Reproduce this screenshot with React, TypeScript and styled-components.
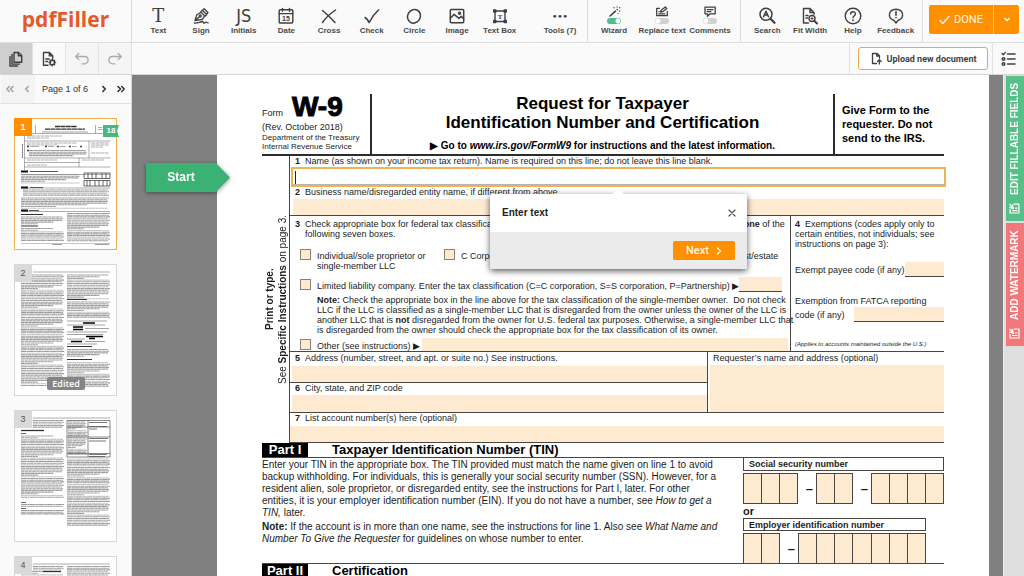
import React, { useState } from "react";
import styled, { createGlobalStyle, css } from "styled-components";

const sans = `"Liberation Sans", Arial, Helvetica, sans-serif`;
const ui = `Roboto, "Liberation Sans", Arial, sans-serif`;
const ink = "#1c1c1c";
const peach = "#fee9d1";
const orange = "#ff9100";
const rule = "#4b4541";

const GlobalStyle = createGlobalStyle`
  *, *::before, *::after { box-sizing: border-box; }
  body { margin: 0; background: #fafafa; font-family: ${sans}; color: ${ink}; }
  button, input { font: inherit; color: inherit; margin: 0; padding: 0; border: 0; border-radius: 0; background: none; outline: none; }
  button { cursor: pointer; }
  p, h1, h2, h3 { margin: 0; font: inherit; }
  svg { display: block; }
`;

/* ---------- shell ---------- */

const Shell = styled.div`
  display: flex;
  flex-direction: column;
  height: 100vh;
  overflow: hidden;
`;

const Header = styled.header`
  display: flex;
  flex: none;
  height: 43px;
  border-bottom: 1px solid #dedede;
  background: #fafafa;
`;

const Logo = styled.a`
  display: flex;
  align-items: center;
  justify-content: center;
  width: 132px;
  flex: none;
  padding-bottom: 4px;
  border-right: 1px solid #dedede;
  font: 700 21px/26px "Open Sans", "Noto Sans", sans-serif;
  color: #e5592a;
  text-decoration: none;
`;

const ToolGroup = styled.div<{ $width: number; $ruled?: boolean; $start?: number; $end?: number }>`
  display: flex;
  flex: none;
  width: ${(p) => p.$width}px;
  padding: 0 ${(p) => p.$end ?? 0}px 0 ${(p) => p.$start ?? 0}px;
  ${(p) => p.$ruled && "border-right: 1px solid #dedede;"}
`;

const toolBox = css`
  display: flex;
  flex: 1 1 0;
  min-width: 0;
  flex-direction: column;
  align-items: center;
  gap: 1px;
  padding-top: 6px;
  font: 700 8px/10px ${sans};
  color: #4a4a4a;
  white-space: nowrap;
  cursor: pointer;
`;

const Tool = styled.button`
  ${toolBox}
`;

const ToggleTool = styled.label`
  ${toolBox}
`;

const ToolIcon = styled.span`
  display: flex;
  align-items: center;
  justify-content: center;
  height: 19px;
  color: #3f3f3f;
`;

const ToggleStack = styled.span`
  display: flex;
  flex-direction: column;
  align-items: center;
  height: 19px;
  color: #3f3f3f;
`;

const Toggle = styled.input`
  appearance: none;
  width: 14px;
  height: 6px;
  border-radius: 3px;
  background: radial-gradient(circle at 3px 3px, #fff 2px, transparent 3px) #d2d2d2;
  &:checked {
    background: radial-gradient(circle at 11px 3px, #fff 2px, transparent 3px) #4fbd8b;
  }
`;

const LetterT = styled.span`
  font: 400 18px/19px "DejaVu Serif", "Liberation Serif", serif;
`;

const LetterJS = styled.span`
  font: 400 18px/19px "DejaVu Sans Condensed", "DejaVu Sans", sans-serif;
`;

const DoneWrap = styled.div`
  display: flex;
  flex: none;
  margin-left: auto;
  padding: 5px 6px 8px;
`;

const Done = styled.button`
  display: flex;
  align-items: center;
  justify-content: center;
  gap: 4px;
  width: 64px;
  border-radius: 2px 0 0 2px;
  background: ${orange};
  color: #fff6e8;
  font: 400 11px/14px ${ui};
`;

const DoneMore = styled.button`
  display: flex;
  align-items: center;
  justify-content: center;
  width: 26px;
  border-left: 1px solid #ffc070;
  border-radius: 0 2px 2px 0;
  background: ${orange};
  color: #fff;
`;

const SubBar = styled.div`
  display: flex;
  flex: none;
  height: 32px;
  border-bottom: 1px solid #d4d4d4;
  background: #fafafa;
`;

const SquareButton = styled.button<{ $active?: boolean; $muted?: boolean }>`
  display: flex;
  align-items: center;
  justify-content: center;
  width: 33px;
  border-right: 1px solid #e2e2e2;
  background: ${(p) => (p.$active ? "#cfcfcf" : p.$muted ? "#f5f5f5" : "#fafafa")};
  color: ${(p) => (p.$muted ? "#ababab" : "#3f3f3f")};
`;

const UploadWrap = styled.div`
  display: flex;
  margin-left: auto;
  padding: 4px 4px 4px 8px;
  border-left: 1px solid #e2e2e2;
  border-right: 1px solid #e2e2e2;
`;

const Upload = styled.button`
  display: flex;
  align-items: center;
  justify-content: center;
  gap: 4px;
  width: 130px;
  border: 1px solid #eda746;
  border-radius: 3px;
  background: #fff;
  color: #3f3f3f;
  font: 700 9px/12px ${ui};
`;

const ListButton = styled.button`
  display: flex;
  align-items: center;
  justify-content: center;
  width: 31px;
  color: #3f3f3f;
`;

const Main = styled.div`
  display: flex;
  flex: 1;
  min-height: 0;
`;

/* ---------- thumbnails ---------- */

const Sidebar = styled.aside`
  display: flex;
  flex-direction: column;
  flex: none;
  width: 132px;
  overflow: hidden;
  border-right: 1px solid #d8d8d8;
  background: #fafafa;
`;

const Pager = styled.nav`
  display: flex;
  flex: none;
  height: 29px;
  align-items: center;
  padding: 0 2px 0 1px;
  border-bottom: 1px solid #e0e0e0;
  font-size: 9px;
  line-height: 12px;
`;

const PagerButton = styled.button<{ $muted?: boolean }>`
  display: flex;
  justify-content: center;
  align-items: center;
  width: 17px;
  height: 28px;
  background: ${(p) => (p.$muted ? "#f4f4f4" : "transparent")};
  color: ${(p) => (p.$muted ? "#9f9f9f" : "#2a2a2a")};
`;

const PagerText = styled.span`
  flex: 1;
  text-align: center;
  white-space: nowrap;
  color: #333;
`;

const Thumbs = styled.div`
  display: flex;
  flex-direction: column;
  gap: 14px;
  padding: 14px;
`;

const Thumb = styled.button<{ $current?: boolean }>`
  position: relative;
  flex: none;
  display: block;
  height: 132px;
  border: 1px solid ${(p) => (p.$current ? "#f0b04c" : "#d6d6d6")};
  background: #fff;
`;

const ThumbNumber = styled.span<{ $current?: boolean }>`
  position: absolute;
  top: -1px;
  left: -1px;
  width: 18px;
  height: 18px;
  background: ${(p) => (p.$current ? orange : "#d9d9d9")};
  color: ${(p) => (p.$current ? "#fff" : "#555")};
  font-size: 9px;
  font-weight: ${(p) => (p.$current ? 700 : 400)};
  line-height: 18px;
  text-align: center;
`;

const FieldCount = styled.span`
  position: absolute;
  top: 6px;
  right: -3px;
  width: 16px;
  height: 12px;
  background: #4bb77f;
  clip-path: polygon(0 0, 100% 0, 88% 50%, 100% 100%, 0 100%);
  color: #fff;
  font: 700 8px/12px ${sans};
  text-align: center;
`;

const Edited = styled.span`
  position: absolute;
  bottom: 5px;
  left: 32px;
  width: 38px;
  border-radius: 2px;
  background: #858585;
  color: #fff;
  font: 600 9px/13px "Open Sans", "Noto Sans", sans-serif;
  text-align: center;
`;

/* ---------- canvas and sheet ---------- */

const Canvas = styled.main`
  position: relative;
  flex: 1;
  min-width: 0;
  overflow: hidden;
  padding: 0 14px 0 85px;
  background: #808080;
`;

const Sheet = styled.article`
  min-height: 998px;
  padding: 19px 45px;
  background: #fff;
  font-size: 9px;
  line-height: 10px;
  white-space: nowrap;
`;

const StartTag = styled.div`
  position: absolute;
  top: 88px;
  left: 14px;
  filter: drop-shadow(0 1px 2px rgba(0, 0, 0, 0.45));
`;

const StartButton = styled.button`
  width: 84px;
  height: 29px;
  padding-right: 14px;
  background: #3bb273;
  clip-path: polygon(0 0, 83% 0, 100% 50%, 83% 100%, 0 100%);
  color: #fff;
  font: 700 12px/29px ${sans};
`;

const FormHead = styled.header`
  display: flex;
  height: 62px;
  border-bottom: 2px solid #2c2c2c;
`;

const HeadLeft = styled.div`
  width: 110px;
  flex: none;
  border-right: 2px solid #2c2c2c;
`;

const FormName = styled.div`
  display: flex;
  align-items: baseline;
  gap: 9px;
  height: 28px;
  line-height: 26px;
`;

const FormCode = styled.strong`
  font-size: 28px;
  font-weight: 900;
  -webkit-text-stroke: 1px #000;
  color: #000;
`;

const Agency = styled.div`
  padding-top: 1px;
  font-size: 8px;
  line-height: 9px;
`;

const HeadTitle = styled.div`
  flex: 1;
  text-align: center;
  font-weight: 700;
  font-size: 17px;
  line-height: 19px;
  color: #000;
`;

const GoTo = styled.p`
  padding-top: 4px;
  font-size: 10px;
  line-height: 20px;
`;

const HeadRight = styled.div`
  width: 111px;
  flex: none;
  padding: 9px 0 0 7px;
  border-left: 2px solid #2c2c2c;
  font-weight: 700;
  font-size: 11px;
  line-height: 14px;
  color: #000;
`;

const FormBody = styled.div`
  display: flex;
`;

const SideNote = styled.div`
  display: flex;
  flex: none;
  flex-direction: column;
  align-items: center;
  width: 28px;
  padding: 0 1px;
  border-left: 1px solid ${rule};
  writing-mode: vertical-rl;
  transform: rotate(180deg);
  font-size: 10px;
  line-height: 13px;
`;

const Rows = styled.div`
  flex: 1;
  min-width: 0;
`;

const FieldLabel = styled.label<{ $height: number; $line?: number }>`
  display: flex;
  height: ${(p) => p.$height}px;
  line-height: ${(p) => p.$line ?? 10}px;
  padding-left: 5px;
`;

const Num = styled.b`
  flex: none;
  width: 10px;
`;

const PeachInput = styled.input<{ $height: number; $inset?: number }>`
  display: block;
  height: ${(p) => p.$height}px;
  width: calc(100% - ${(p) => p.$inset ?? 0}px);
  margin-left: ${(p) => p.$inset ?? 0}px;
  background: ${peach};
`;

const Ruled = styled.div`
  border-bottom: 1px solid ${rule};
`;

const ActiveField = styled.div`
  position: relative;
  display: flex;
  align-items: center;
  height: 20px;
  margin: 0 -2px 0 1px;
  border: 2px solid #efb356;
  background: #fff;
  box-shadow: inset 0 -1px 0 #b9b3ab;
`;

const Caret = styled.span`
  width: 1px;
  height: 13px;
  margin-left: 2px;
  background: #222;
`;

const ActiveInput = styled.input`
  flex: 1;
  min-width: 0;
  height: 14px;
  padding-left: 2px;
  caret-color: transparent;
`;

const SplitRow = styled.div`
  display: flex;
  border-bottom: 1px solid ${rule};
`;

const ClassCol = styled.div`
  flex: 1;
  min-width: 0;
  padding-top: 3px;
  border-right: 1px solid ${rule};
`;

const ExemptCol = styled.div`
  flex: none;
  width: 153px;
  padding: 3px 0 0 4px;
`;

const Line = styled.div<{ $top?: number; $height: number; $start?: number; $align?: string }>`
  display: flex;
  align-items: ${(p) => p.$align ?? "center"};
  height: ${(p) => p.$height}px;
  margin-top: ${(p) => p.$top ?? 0}px;
  padding-left: ${(p) => p.$start ?? 0}px;
`;

const Choice = styled.label<{ $width?: number }>`
  display: flex;
  align-items: flex-start;
  gap: 6px;
  flex: none;
  ${(p) => p.$width && `width: ${p.$width}px;`}
`;

const ChoiceText = styled.span`
  padding-top: 2px;
`;

const Tick = styled.input`
  appearance: none;
  flex: none;
  width: 11px;
  height: 11px;
  border: 1px solid #8a8178;
  background: ${peach};
`;

const InlineInput = styled.input<{ $height: number; $width?: number; $ruled?: boolean }>`
  align-self: flex-start;
  height: ${(p) => p.$height}px;
  min-width: 0;
  ${(p) => (p.$width ? `flex: none; width: ${p.$width}px;` : "flex: 1;")}
  ${(p) => p.$ruled && `border-bottom: 1px solid ${rule};`}
  background: ${peach};
`;

const Gap = styled.span<{ $width: number }>`
  flex: none;
  width: ${(p) => p.$width}px;
`;

const NoteText = styled.p`
  padding: 4px 0 0 27px;
`;

const FinePrint = styled.p`
  padding-top: 17px;
  font-size: 6px;
  font-style: italic;
`;

const AddressCol = styled.div`
  flex: 1;
  min-width: 0;
  border-right: 1px solid ${rule};
`;

const RequesterCol = styled.div`
  flex: none;
  width: 236px;
`;

const PartHead = styled.div`
  display: flex;
  height: 15px;
  border-bottom: 1px solid ${rule};
  font-weight: 700;
  font-size: 13px;
  line-height: 14px;
  color: #000;
`;

const PartTag = styled.span`
  width: 46px;
  margin-right: 24px;
  background: #000;
  color: #fff;
  text-align: center;
`;

const TinRow = styled.div`
  display: flex;
  justify-content: space-between;
  height: 106px;
  border-bottom: 1px solid ${rule};
`;

const TinText = styled.div`
  display: flex;
  flex-direction: column;
  gap: 2px;
  padding-top: 1px;
  font-size: 10px;
  line-height: 12px;
`;

const TinBoxes = styled.div`
  width: 201px;
  flex: none;
`;

const NumberBlock = styled.fieldset<{ $width: number }>`
  margin: 0;
  padding: 0;
  border: 0;
  min-width: 0;
  width: ${(p) => p.$width}px;
`;

const NumberTitle = styled.div<{ $top?: boolean }>`
  height: 13px;
  margin-bottom: 2px;
  padding-left: 5px;
  border: 1px solid ${rule};
  ${(p) => !p.$top && "border-top: 0;"}
  font-weight: 700;
  line-height: 12px;
`;

const Cells = styled.div<{ $height: number; $units: number }>`
  display: grid;
  grid-template-columns: repeat(${(p) => p.$units}, minmax(0, 1fr));
  height: ${(p) => p.$height}px;
`;

const CellGroup = styled.div<{ $count: number }>`
  display: flex;
  grid-column: span ${(p) => p.$count};
  min-width: 0;
  border: 1px solid ${rule};
  border-right: 0;
`;

const Cell = styled.input`
  flex: 1 1 0;
  width: 0;
  min-width: 0;
  border-right: 1px solid ${rule};
  background: ${peach};
  text-align: center;
`;

const Dash = styled.span`
  display: flex;
  min-width: 0;
  align-items: center;
  justify-content: center;
  padding-left: 5px;
  font-weight: 700;
  font-size: 13px;
`;

const OrText = styled.div`
  height: 14px;
  font-weight: 700;
  font-size: 11px;
  line-height: 15px;
`;

/* ---------- hint popover ---------- */

const Popover = styled.div`
  position: absolute;
  top: 25px;
  left: 197px;
  width: 257px;
  background: #fff;
  border-radius: 2px;
  box-shadow: 0 2px 6px rgba(0, 0, 0, 0.65);
  z-index: 2;
  &::before {
    content: "";
    position: absolute;
    top: -5px;
    left: 122px;
    border: 6px solid transparent;
    border-top: 0;
    border-bottom: 5px solid #fff;
  }
`;

const PopHead = styled.div`
  display: flex;
  align-items: center;
  justify-content: space-between;
  height: 38px;
  padding: 0 10px 0 12px;
  font-weight: 700;
  font-size: 10px;
`;

const PopFoot = styled.div`
  display: flex;
  justify-content: flex-end;
  height: 37px;
  padding: 9px 12px;
  border-radius: 0 0 2px 2px;
  background: #ebebeb;
`;

const CloseButton = styled.button`
  display: flex;
  padding: 1px;
  color: #555;
`;

const Next = styled.button`
  display: flex;
  align-items: center;
  justify-content: center;
  gap: 7px;
  width: 62px;
  height: 19px;
  border-radius: 2px;
  background: ${orange};
  color: #fff4e2;
  font: 500 11px/19px ${ui};
`;

/* ---------- right rail ---------- */

const Rail = styled.aside`
  display: flex;
  flex: none;
  flex-direction: column;
  gap: 2px;
  width: 21px;
  padding: 1px 1px 0 2px;
  border-left: 1px solid #efefef;
  background: #dedede;
`;

const RailTab = styled.button<{ $color: string; $height: number }>`
  display: flex;
  align-items: center;
  gap: 8px;
  width: 18px;
  height: ${(p) => p.$height}px;
  padding: 7px 0;
  background: ${(p) => p.$color};
  color: #fff;
  font: 700 10px/18px ${sans};
  writing-mode: vertical-rl;
  transform: rotate(180deg);
  white-space: nowrap;
`;

/* ---------- icons ---------- */

type IconProps = { w?: number; h?: number; sw?: number; children: React.ReactNode };

const Icon = ({ w = 18, h = 18, sw = 1.4, children }: IconProps) => (
  <svg
    width={w}
    height={h}
    viewBox={`0 0 ${w} ${h}`}
    fill="none"
    stroke="currentColor"
    strokeWidth={sw}
    strokeLinecap="round"
    strokeLinejoin="round"
    aria-hidden="true"
  >
    {children}
  </svg>
);

const SignIcon = () => (
  <Icon sw={1.3}>
    <path d="M3 13.500 4.800 7.800 9 5.200l3.600 3.600-2.200 3.500L3 13.500Zm.3-.3 4.200-3.500M8.800 4.700l1.500-1.500 4.500 4.300-1.500 1.500M10.800 3l1.400-1.200L16 5.500l-1.200 1.300" />
    <circle cx="8.300" cy="9" r="1" />
    <path d="M2.400 16c3.200.6 5.200-1.300 8-1.500 1.300 0 .4 1.700 1.600 1.700 1 0 1-1 2.200-1 .8 0 .8.800 2 .600" />
  </Icon>
);
const DateIcon = () => (
  <Icon>
    <rect x="2.200" y="2.800" width="13.600" height="13.200" rx="1" />
    <path d="M2.200 6.600h13.600M5.500 1.400v2.800M12.500 1.400v2.800" />
    <text x="9" y="14.200" textAnchor="middle" fontFamily="Liberation Sans" fontSize="7" fontWeight="700" fill="currentColor" stroke="none">
      15
    </text>
  </Icon>
);
const CrossIcon = () => (
  <Icon sw={1.5}>
    <path d="M2.500 3.500c4 3.200 8.500 7.600 12.500 12M15.500 3C10.500 6.500 5.500 11 2.500 15.500" />
  </Icon>
);
const CheckIcon = () => (
  <Icon sw={1.6}>
    <path d="M2.200 10.500c1.800 1.400 2.800 2.800 4 5C8.500 10.500 11.500 6.500 15.500 3" />
  </Icon>
);
const CircleIcon = () => (
  <Icon sw={1.5}>
    <ellipse cx="9" cy="9.300" rx="6.300" ry="7" transform="rotate(30 9 9.300)" />
  </Icon>
);
const ImageIcon = () => (
  <Icon sw={1.5}>
    <rect x="2.300" y="2.600" width="13.400" height="13.200" rx="1" />
    <path d="m2.500 11 3.500-3.600 5 4 2.200-2 2.400 2.400" />
    <circle cx="11.500" cy="6.300" r="1" />
  </Icon>
);
const TextBoxIcon = () => (
  <Icon>
    <path d="M4 4h10v10.500H4z" />
    <g fill="currentColor" stroke="none">
      <rect x="2" y="2.200" width="3.500" height="3.500" rx=".8" />
      <rect x="12.500" y="2.200" width="3.500" height="3.500" rx=".8" />
      <rect x="2" y="12.800" width="3.500" height="3.500" rx=".8" />
      <rect x="12.500" y="12.800" width="3.500" height="3.500" rx=".8" />
      <text x="9" y="11.800" textAnchor="middle" fontFamily="Liberation Serif" fontSize="7" fontWeight="700">
        T
      </text>
    </g>
  </Icon>
);
const DotsIcon = () => (
  <Icon>
    <g fill="currentColor" stroke="none">
      <circle cx="3.800" cy="9.300" r="1.400" />
      <circle cx="9" cy="9.300" r="1.400" />
      <circle cx="14.200" cy="9.300" r="1.400" />
    </g>
  </Icon>
);
const WandIcon = () => (
  <Icon w={14} h={12} sw={1.6}>
    <path d="m3 10 5.500-4.800" />
    <g fill="currentColor" stroke="none">
      <circle cx="10.200" cy="3.600" r=".8" />
      <circle cx="7" cy="1.800" r=".7" />
      <circle cx="10" cy=".9" r=".6" />
      <circle cx="12.600" cy="1.700" r=".7" />
      <circle cx="12.600" cy="5" r=".7" />
      <circle cx="11" cy="7.600" r=".7" />
    </g>
  </Icon>
);
const ReplaceIcon = () => (
  <Icon w={14} h={12} sw={1.300}>
    <path d="M4.500 2.300H1.700v7.400h10.600V5.500M3.800 7.900h6M5.500 6.200l.6-2L10.300 1l1.500 1.600-4 3.100-2.300.5ZM4 5.500v.1" />
  </Icon>
);
const CommentIcon = () => (
  <Icon w={14} h={12} sw={1.300}>
    <path d="M2 1.200h10.200v6.600H7l-2.500 2.400V7.800H2zM4.300 3.600h5.600M4.300 5.600h3.600" />
  </Icon>
);
const SearchIcon = () => (
  <Icon sw={1.5}>
    <circle cx="8" cy="7.300" r="6" />
    <path d="m12.500 11.800 4 4" strokeWidth="2.200" />
    <path d="m5.500 9.800 2.500-5.500 2.500 5.500M6.500 8.100h3" />
  </Icon>
);
const FitIcon = () => (
  <Icon>
    <path d="M7.500 16H2.500V1.500H9L13 5.500v1.700M9 1.500v4h4M5 8.500h2M5 11h1.500" />
    <circle cx="11" cy="11.500" r="3" />
    <path d="m13.300 13.800 2.700 2.700" strokeWidth="2" />
    <path d="M10 11.500h2M11 10.500v2" strokeWidth="1" />
  </Icon>
);
const HelpIcon = () => (
  <Icon>
    <circle cx="9" cy="9" r="7.800" />
    <path d="M6.600 7.100c0-3.200 4.800-3.200 4.800 0 0 1.700-2.400 1.700-2.400 3.700" />
    <path d="M9 13.200v.1" strokeWidth="1.700" />
  </Icon>
);
const FeedbackIcon = () => (
  <Icon>
    <path d="M6.800 13.200C.5 11.500.8 2.500 9 2.300c8.200.2 8.500 9.200 2.200 10.900L9 16z" />
    <path d="M9 4.800v3.500M9 10.600v.1" strokeWidth="1.600" />
  </Icon>
);
const PagesIcon = () => (
  <Icon w={16} h={16} sw={1.4}>
    <path d="M6 1.500h4.500L13.700 4.500v6.700H6zM10.300 1.700v3h3.200M4 3.500v9.600h7.500M2 5.500V15h7.500" />
  </Icon>
);
const PageGearIcon = () => (
  <Icon w={16} h={16} sw={1.4}>
    <path d="M7 14.200H2.500V1.500h6l3.200 3.200v2.500M8.300 1.700v3.200h3.200M4.800 8h3.400M4.800 10.500h1.800" />
    <circle cx="11.300" cy="11.500" r="2.200" />
    <path d="M11.300 8.300v.3M11.300 14.400v.3M8.200 11.500h.3M14.200 11.500h.3M9.100 9.300l.2.200M13.300 13.500l.2.200M13.500 9.300l-.2.200M9.300 13.500l-.2.200" strokeWidth="1.600" />
  </Icon>
);
const UndoIcon = () => (
  <Icon w={16} h={14} sw={1.3}>
    <path d="M4.800 1.500 1.600 4.500l3.200 3M1.800 4.500h8.700c4.800 0 4.800 7.300 0 7.300H8" />
  </Icon>
);
const RedoIcon = () => (
  <Icon w={16} h={14} sw={1.3}>
    <path d="m11.200 1.500 3.200 3-3.200 3M14.200 4.500H5.500c-4.800 0-4.800 7.300 0 7.300H8" />
  </Icon>
);
const UploadIcon = () => (
  <Icon w={13} h={13} sw={1.3}>
    <path d="M6.500 11.500h-4v-10H7l2.500 2.300v2.400M6.800 1.500V4h2.500M9.300 12V8M7.500 9.500 9.300 7.700l1.800 1.800" />
  </Icon>
);
const ListIcon = () => (
  <Icon w={17} h={16} sw={1.5}>
    <path d="M7.500 3h7.500M7.500 8h7.500M7.500 13h7.500" />
    <path d="m2 2.500 1.300 1.300 2-2.300" strokeWidth="1.300" />
    <circle cx="3.500" cy="8" r="1.300" />
    <circle cx="3.500" cy="13" r="1.300" />
  </Icon>
);
const Chevron = ({ dir, double }: { dir: "left" | "right"; double?: boolean }) => (
  <Icon w={10} h={8} sw={1.5}>
    <g transform={dir === "left" ? "matrix(-1 0 0 1 10 0)" : undefined}>
      {double ? <path d="M2 1.500 4.500 4 2 6.500M5.700 1.500 8.200 4 5.700 6.500" /> : <path d="M3.800 1.500 6.300 4 3.800 6.500" />}
    </g>
  </Icon>
);
const StampIcon = () => (
  <Icon w={11} h={11} sw={1.2}>
    <path d="M6 10H1V1h9v4M3 3.500h4.500M3 6h1.500M10.300 7 6.500 5.500 7.800 9.500M8 7.300l2.300 2.600" />
  </Icon>
);

/* ---------- thumbnail drawings ---------- */

type BlockProps = { x: number; y: number; w: number; rows: number; step?: number; seed?: number };

const TextBlock = ({ x, y, w, rows, step = 1.7, seed = 1 }: BlockProps) => (
  <g stroke="#8c8c8c" strokeWidth="1.1">
    {Array.from({ length: rows }, (_, i) => {
      const k = (i * 7 + seed * 5) % 11;
      const length = k === 0 ? w * 0.4 : k === 4 ? w * 0.75 : w - (k % 3);
      return (
        <line
          key={i}
          x1={x}
          x2={x + length}
          y1={y + i * step}
          y2={y + i * step}
          strokeDasharray={`${3 + (k % 4)} 0.4 ${2 + (k % 3)} 0.3`}
          opacity={k % 5 === 2 ? 0.5 : 0.85}
        />
      );
    })}
  </g>
);

const ThumbSvg = ({ children }: { children: React.ReactNode }) => (
  <svg width="100%" height="100%" viewBox="0 0 101 130" aria-hidden="true">
    {children}
  </svg>
);

const FirstPage = () => (
  <ThumbSvg>
    <g stroke="#333" strokeWidth="1.3">
      <path d="M40 7.500h22M30 10.200h40" strokeDasharray="5 .4" />
    </g>
    <path d="M27 13h46" stroke="#888" strokeWidth=".8" />
    <path d="M6 14.500h89M20.500 6v8.500M80.500 6v8.500M9.500 14.500V51M9.500 22h86M9.500 39h86M9.500 43.500h55M9.500 48h86M64 39v9M74 22v17M6 55.500h89M6 69h89M6 92.500h89" stroke="#777" strokeWidth=".6" fill="none" />
    <path d="M7.500 25v14" stroke="#777" strokeWidth="1" strokeDasharray="2 .4" />
    <path d="M83 8.500h10M83 10.500h11M12 17h35M12 19h22M12 24h50M12 26h30M76 24h18M76 26h18M76 28h12M76 34h18M12 41h30M12 46h20M67 41h22" stroke="#999" strokeWidth=".8" strokeDasharray="4 .5" />
    <path d="M12 27.500h2M30 27.500h2M42 27.500h2M54 27.500h2M65 27.500h2M12 31.500h2" stroke="#444" strokeWidth="1.400" />
    <path d="M15 27.500h9M33 27.500h6M45 27.500h6M57 27.500h5" stroke="#999" strokeWidth=".8" />
    <TextBlock x={14} y={31.5} w={59} rows={4} />
    <path d="M6 52.500h7M6 68.500h7M6 91.500h7" stroke="#111" strokeWidth="1.800" />
    <path d="M15 52.500h28M15 68.500h13M14 91.500h10" stroke="#555" strokeWidth="1.100" />
    <TextBlock x={6} y={55.5} w={60} rows={6} />
    <path d="M69 54h26v5.500H69zM69 61.500h26V67H69zM73 54v5.500M77 54v5.500M81 54v5.500M87 54v5.500M91 54v5.500M72 61.500V67M75 61.500V67M80 61.500V67M84 61.500V67M88 61.500V67M92 61.500V67" stroke="#444" strokeWidth=".8" fill="none" />
    <TextBlock x={8} y={71} w={86} rows={4} seed={2} />
    <TextBlock x={6} y={79} w={88} rows={7} seed={4} />
    <path d="M6 95.500h22M6 107h17" stroke="#333" strokeWidth="1.200" />
    <TextBlock x={6} y={98} w={43} rows={5} seed={1} />
    <TextBlock x={6} y={109.5} w={43} rows={8} seed={3} />
    <TextBlock x={52} y={94.5} w={43} rows={17} seed={5} />
    <path d="M6 124.500h89" stroke="#888" strokeWidth=".5" />
    <path d="M37 125.500h10M80 125.500h14" stroke="#888" strokeWidth=".8" />
  </ThumbSvg>
);

const SecondPage = () => (
  <ThumbSvg>
    <path d="M18 7h77" stroke="#777" strokeWidth=".6" />
    <TextBlock x={6} y={10} w={43} rows={66} seed={2} />
    <TextBlock x={52} y={10} w={43} rows={15} seed={6} />
    <path d="M52 34.500h20M52 81.500h25M52 94.500h25" stroke="#333" strokeWidth="1.200" />
    <TextBlock x={52} y={37} w={43} rows={10} seed={4} />
    <path d="M68 58h12M58 62h10M58 64.500h10M71 71.500h17M74 73.500h6M56 76.500h11" stroke="#000" strokeWidth="1.600" />
    <path d="M52 56h40M52 60h38M70 63.500h24M52 67h40M52 69.500h36M52 74h18M70 76.500h20M52 79h30" stroke="#999" strokeWidth=".9" />
    <TextBlock x={52} y={84.5} w={43} rows={5} seed={1} />
    <TextBlock x={52} y={97.5} w={43} rows={15} seed={7} />
  </ThumbSvg>
);

const ThirdPage = () => (
  <ThumbSvg>
    <path d="M18 7h77" stroke="#777" strokeWidth=".6" />
    <TextBlock x={18} y={9.5} w={31} rows={5} seed={2} />
    <path d="M6 19.500h23" stroke="#333" strokeWidth="1.300" />
    <path d="M6 22.500h5" stroke="#666" strokeWidth="1" />
    <TextBlock x={6} y={25} w={43} rows={37} seed={3} />
    <path d="M6 91.500h5M6 97.500h5" stroke="#666" strokeWidth="1" />
    <TextBlock x={6} y={93.5} w={43} rows={2} seed={5} />
    <TextBlock x={6} y={99.5} w={43} rows={3} seed={5} />
    <TextBlock x={53} y={11} w={19} rows={20} seed={1} />
    <path d="M74 11.500h18M74 15.500h18M74 18h8M74 27.500h19M74 30h17M74 43.500h18M74 45.500h16" stroke="#777" strokeWidth="1" />
    <path d="M52 9.500h43V46H52zM73 9.500V46M52 16h43M52 26h43M52 42.500h43" stroke="#555" strokeWidth=".7" fill="none" />
    <TextBlock x={52} y={48} w={43} rows={40} seed={8} />
  </ThumbSvg>
);

const FourthPage = () => (
  <ThumbSvg>
    <path d="M18 7h77" stroke="#777" strokeWidth=".6" />
    <TextBlock x={18} y={9.5} w={31} rows={3} seed={2} />
    <TextBlock x={6} y={14.5} w={43} rows={50} seed={3} />
    <path d="M28 14.500h18" stroke="#333" strokeWidth="1.300" />
    <TextBlock x={52} y={9.5} w={43} rows={55} seed={5} />
  </ThumbSvg>
);

/* ---------- data ---------- */

const drawTools: [string, React.ReactNode][] = [
  ["Text", <LetterT>T</LetterT>],
  ["Sign", <SignIcon />],
  ["Initials", <LetterJS>JS</LetterJS>],
  ["Date", <DateIcon />],
  ["Cross", <CrossIcon />],
  ["Check", <CheckIcon />],
  ["Circle", <CircleIcon />],
  ["Image", <ImageIcon />],
  ["Text Box", <TextBoxIcon />],
];

const modeTools: [string, React.ReactNode, boolean][] = [
  ["Wizard", <WandIcon />, true],
  ["Replace text", <ReplaceIcon />, false],
  ["Comments", <CommentIcon />, false],
];

const viewTools: [string, React.ReactNode][] = [
  ["Search", <SearchIcon />],
  ["Fit Width", <FitIcon />],
  ["Help", <HelpIcon />],
  ["Feedback", <FeedbackIcon />],
];

const pages = [<FirstPage />, <SecondPage />, <ThirdPage />, <FourthPage />];

/* ---------- parts ---------- */

const ToolButton = ({ label, icon }: { label: string; icon: React.ReactNode }) => (
  <Tool type="button">
    <ToolIcon>{icon}</ToolIcon>
    {label}
  </Tool>
);

const CheckItem = ({ children, width }: { children: React.ReactNode; width?: number }) => (
  <Choice $width={width}>
    <Tick type="checkbox" />
    <ChoiceText>{children}</ChoiceText>
  </Choice>
);

const DigitGroup = ({ count, name }: { count: number; name: string }) => (
  <CellGroup $count={count}>
    {Array.from({ length: count }, (_, i) => (
      <Cell key={i} maxLength={1} aria-label={`${name} digit ${i + 1}`} />
    ))}
  </CellGroup>
);

const TopBars = () => (
  <>
    <Header>
      <Logo href="#">pdfFiller</Logo>
      <ToolGroup $width={389} $start={5}>
        {drawTools.map(([label, icon]) => (
          <ToolButton key={label} label={label} icon={icon} />
        ))}
      </ToolGroup>
      <ToolGroup $width={67} $start={12} $ruled>
        <ToolButton label="Tools (7)" icon={<DotsIcon />} />
      </ToolGroup>
      <ToolGroup $width={153} $start={2} $end={6} $ruled>
        {modeTools.map(([label, icon, on]) => (
          <ToggleTool key={label}>
            <ToggleStack>
              {icon}
              <Toggle type="checkbox" defaultChecked={on} />
            </ToggleStack>
            {label}
          </ToggleTool>
        ))}
      </ToolGroup>
      <ToolGroup $width={182} $start={5} $end={5} $ruled>
        {viewTools.map(([label, icon]) => (
          <ToolButton key={label} label={label} icon={icon} />
        ))}
      </ToolGroup>
      <DoneWrap>
        <Done type="button">
          <Icon w={11} h={10} sw={1.5}>
            <path d="m1 5.500 2.800 3L10 1.500" />
          </Icon>
          DONE
        </Done>
        <DoneMore type="button" aria-label="More save options">
          <Icon w={8} h={6} sw={1.5}>
            <path d="m1.800 1.500 2.200 2 2.200-2" />
          </Icon>
        </DoneMore>
      </DoneWrap>
    </Header>
    <SubBar>
      <SquareButton type="button" $active aria-label="Pages">
        <PagesIcon />
      </SquareButton>
      <SquareButton type="button" aria-label="Page settings">
        <PageGearIcon />
      </SquareButton>
      <SquareButton type="button" $muted aria-label="Undo">
        <UndoIcon />
      </SquareButton>
      <SquareButton type="button" $muted aria-label="Redo">
        <RedoIcon />
      </SquareButton>
      <UploadWrap>
        <Upload type="button">
          <UploadIcon />
          Upload new document
        </Upload>
      </UploadWrap>
      <ListButton type="button" aria-label="Field list">
        <ListIcon />
      </ListButton>
    </SubBar>
  </>
);

const Pages = () => (
  <Sidebar>
    <Pager aria-label="Page navigation">
      <PagerButton type="button" $muted aria-label="First page">
        <Chevron dir="left" double />
      </PagerButton>
      <PagerButton type="button" $muted aria-label="Previous page">
        <Chevron dir="left" />
      </PagerButton>
      <PagerText>Page 1 of 6</PagerText>
      <PagerButton type="button" aria-label="Next page">
        <Chevron dir="right" />
      </PagerButton>
      <PagerButton type="button" aria-label="Last page">
        <Chevron dir="right" double />
      </PagerButton>
    </Pager>
    <Thumbs>
      {pages.map((drawing, i) => (
        <Thumb type="button" key={i} $current={i === 0}>
          {drawing}
          <ThumbNumber $current={i === 0}>{i + 1}</ThumbNumber>
          {i === 0 && <FieldCount>18</FieldCount>}
          {i === 1 && <Edited>Edited</Edited>}
        </Thumb>
      ))}
    </Thumbs>
  </Sidebar>
);

const Hint = ({ onClose }: { onClose: () => void }) => (
  <Popover role="dialog" aria-label="Enter text">
    <PopHead>
      Enter text
      <CloseButton type="button" aria-label="Close" onClick={onClose}>
        <Icon w={8} h={8} sw={1.2}>
          <path d="m1 1 6 6M7 1 1 7" />
        </Icon>
      </CloseButton>
    </PopHead>
    <PopFoot>
      <Next type="button">
        Next
        <Icon w={6} h={8} sw={1.4}>
          <path d="m1.500 1 3 3-3 3" />
        </Icon>
      </Next>
    </PopFoot>
  </Popover>
);

const Form = () => {
  const [hint, setHint] = useState(true);
  return (
    <Sheet>
      <FormHead>
        <HeadLeft>
          <FormName>
            Form <FormCode>W-9</FormCode>
          </FormName>
          (Rev. October 2018)
          <Agency>
            Department of the Treasury
            <br />
            Internal Revenue Service
          </Agency>
        </HeadLeft>
        <HeadTitle>
          <h1>
            Request for Taxpayer
            <br />
            Identification Number and Certification
          </h1>
          <GoTo>
            ▶ Go to <i>www.irs.gov/FormW9</i> for instructions and the latest information.
          </GoTo>
        </HeadTitle>
        <HeadRight>
          Give Form to the
          <br />
          requester. Do not
          <br />
          send to the IRS.
        </HeadRight>
      </FormHead>
      <FormBody>
        <SideNote>
          <b>Print or type.</b>
          <span>
            See <b>Specific Instructions</b> on page 3.
          </span>
        </SideNote>
        <Rows>
          <FieldLabel htmlFor="name" $height={11}>
            <Num>1</Num>Name (as shown on your income tax return). Name is required on this line; do not leave this line blank.
          </FieldLabel>
          <ActiveField>
            <Caret />
            <ActiveInput id="name" />
            {hint && <Hint onClose={() => setHint(false)} />}
          </ActiveField>
          <Ruled>
            <FieldLabel htmlFor="business" $height={12}>
              <Num>2</Num>Business name/disregarded entity name, if different from above
            </FieldLabel>
            <PeachInput id="business" $height={16} $inset={3} />
          </Ruled>
          <SplitRow>
            <ClassCol>
              <Line $height={20} $start={5} $align="flex-start">
                <Num>3</Num>
                <span>
                  Check appropriate box for federal tax classification of the person whose name is entered on line 1; check only <b>one</b> of the
                  <br />
                  following seven boxes.
                </span>
              </Line>
              <Line $top={10} $height={23} $start={10} $align="flex-start">
                <CheckItem width={144}>
                  Individual/sole proprietor or
                  <br />
                  single-member LLC
                </CheckItem>
                <CheckItem width={86}>C Corporation</CheckItem>
                <CheckItem width={86}>S Corporation</CheckItem>
                <CheckItem width={98}>Partnership</CheckItem>
                <CheckItem>Trust/estate</CheckItem>
              </Line>
              <Line $top={5} $height={14} $start={10} $align="flex-end">
                <CheckItem>Limited liability company. Enter the tax classification (C=C corporation, S=S corporation, P=Partnership) ▶</CheckItem>
                <InlineInput $height={15} $width={43} $ruled aria-label="Tax classification" />
              </Line>
              <NoteText>
                <b>Note:</b> Check the appropriate box in the line above for the tax classification of the single-member owner.&nbsp; Do not check
                <br />
                LLC if the LLC is classified as a single-member LLC that is disregarded from the owner unless the owner of the LLC is
                <br />
                another LLC that is <b>not</b> disregarded from the owner for U.S. federal tax purposes. Otherwise, a single-member LLC that
                <br />
                is disregarded from the owner should check the appropriate box for the tax classification of its owner.
              </NoteText>
              <Line $top={3} $height={13} $start={10}>
                <CheckItem>Other (see instructions) ▶</CheckItem>
                <Gap $width={2} />
                <InlineInput $height={13} aria-label="Other classification" />
                <Gap $width={2} />
              </Line>
            </ClassCol>
            <ExemptCol>
              <b>4</b>&nbsp; Exemptions (codes apply only to
              <br />
              certain entities, not individuals; see
              <br />
              instructions on page 3):
              <Line as="label" $top={13} $height={15}>
                Exempt payee code (if any)
                <InlineInput $height={15} $ruled />
              </Line>
              <Line $top={19} $height={10}>
                Exemption from FATCA reporting
              </Line>
              <Line as="label" $top={1} $height={15}>
                code (if any)
                <Gap $width={9} />
                <InlineInput $height={15} $ruled />
              </Line>
              <FinePrint>(Applies to accounts maintained outside the U.S.)</FinePrint>
            </ExemptCol>
          </SplitRow>
          <SplitRow>
            <AddressCol>
              <Ruled>
                <FieldLabel htmlFor="address" $height={14} $line={12}>
                  <Num>5</Num>Address (number, street, and apt. or suite no.) See instructions.
                </FieldLabel>
                <PeachInput id="address" $height={16} $inset={2} />
              </Ruled>
              <FieldLabel htmlFor="city" $height={12}>
                <Num>6</Num>City, state, and ZIP code
              </FieldLabel>
              <PeachInput id="city" $height={17} $inset={2} />
            </AddressCol>
            <RequesterCol>
              <FieldLabel htmlFor="requester" $height={13} $line={12}>
                Requester’s name and address (optional)
              </FieldLabel>
              <PeachInput id="requester" $height={47} $inset={2} />
            </RequesterCol>
          </SplitRow>
          <Ruled>
            <FieldLabel htmlFor="accounts" $height={13} $line={11}>
              <Num>7</Num>List account number(s) here (optional)
            </FieldLabel>
            <PeachInput id="accounts" $height={16} />
          </Ruled>
        </Rows>
      </FormBody>
      <PartHead>
        <PartTag>Part I</PartTag>
        <h2>Taxpayer Identification Number (TIN)</h2>
      </PartHead>
      <TinRow>
        <TinText>
          <p>
            Enter your TIN in the appropriate box. The TIN provided must match the name given on line 1 to avoid
            <br />
            backup withholding. For individuals, this is generally your social security number (SSN). However, for a
            <br />
            resident alien, sole proprietor, or disregarded entity, see the instructions for Part I, later. For other
            <br />
            entities, it is your employer identification number (EIN). If you do not have a number, see <i>How to get a</i>
            <br />
            <i>TIN,</i> later.
          </p>
          <p>
            <b>Note:</b> If the account is in more than one name, see the instructions for line 1. Also see <i>What Name and</i>
            <br />
            <i>Number To Give the Requester</i> for guidelines on whose number to enter.
          </p>
        </TinText>
        <TinBoxes>
          <NumberBlock $width={201} aria-label="Social security number">
            <NumberTitle>Social security number</NumberTitle>
            <Cells $height={31} $units={11}>
              <DigitGroup count={3} name="SSN area" />
              <Dash>–</Dash>
              <DigitGroup count={2} name="SSN group" />
              <Dash>–</Dash>
              <DigitGroup count={4} name="SSN serial" />
            </Cells>
          </NumberBlock>
          <OrText>or</OrText>
          <NumberBlock $width={183} aria-label="Employer identification number">
            <NumberTitle $top>Employer identification number</NumberTitle>
            <Cells $height={31} $units={10}>
              <DigitGroup count={2} name="EIN prefix" />
              <Dash>–</Dash>
              <DigitGroup count={7} name="EIN serial" />
            </Cells>
          </NumberBlock>
        </TinBoxes>
      </TinRow>
      <PartHead>
        <PartTag>Part II</PartTag>
        <h2>Certification</h2>
      </PartHead>
    </Sheet>
  );
};

export default function App() {
  return (
    <>
      <GlobalStyle />
      <Shell>
        <TopBars />
        <Main>
          <Pages />
          <Canvas>
            <Form />
            <StartTag>
              <StartButton type="button">Start</StartButton>
            </StartTag>
          </Canvas>
          <Rail>
            <RailTab type="button" $color="#57c088" $height={145}>
              <StampIcon />
              EDIT FILLABLE FIELDS
            </RailTab>
            <RailTab type="button" $color="#f0787a" $height={123}>
              <StampIcon />
              ADD WATERMARK
            </RailTab>
          </Rail>
        </Main>
      </Shell>
    </>
  );
}
